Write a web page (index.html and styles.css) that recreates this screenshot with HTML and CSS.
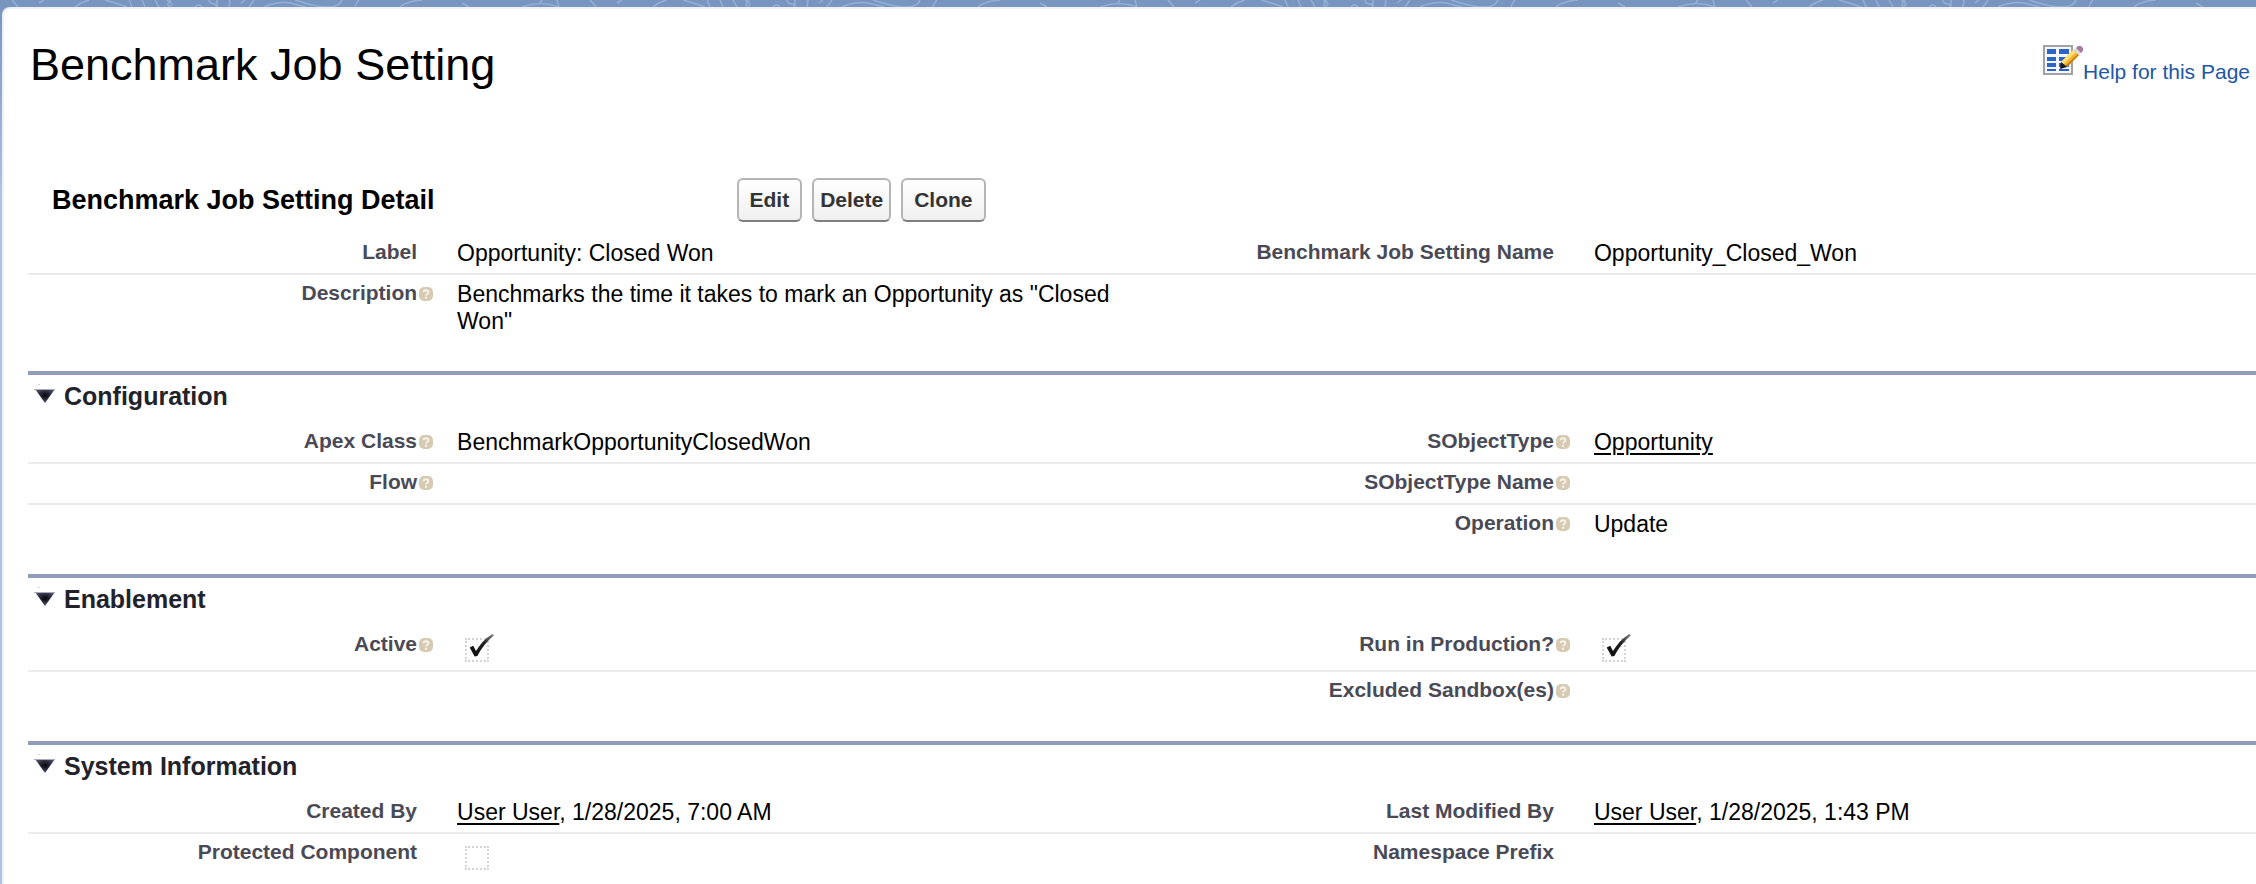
FILE: index.html
```html
<!DOCTYPE html>
<html lang="en">
<head>
<meta charset="utf-8">
<title>Benchmark Job Setting</title>
<link rel="stylesheet" href="styles.css">
</head>
<body>
<svg class="defs" width="0" height="0" aria-hidden="true">
  <defs>
    <radialGradient id="arrowFill" cx="50%" cy="45%" r="55%">
      <stop offset="0" stop-color="#05050a"/>
      <stop offset="1" stop-color="#50546f"/>
    </radialGradient>
    <linearGradient id="tickFill" x1="0" y1="1" x2="1" y2="0">
      <stop offset="0" stop-color="#0c0c0c"/>
      <stop offset=".6" stop-color="#222"/>
      <stop offset="1" stop-color="#8a8a8a"/>
    </linearGradient>
    <symbol id="help" viewBox="0 0 14 14">
      <rect width="14" height="14" rx="5" fill="#d6cab3"/>
      <path d="M4.6 5.2C4.7 2.6 9.4 2.6 9.4 5.2C9.4 7 7 6.8 7 8.6" fill="none" stroke="#f8f4ec" stroke-width="1.8"/>
      <rect x="6" y="9.8" width="2" height="2" fill="#f8f4ec"/>
    </symbol>
    <symbol id="arrow" viewBox="0 0 22 20">
      <rect x="4" y="0" width="2" height="1" fill="#d5d6df"/>
      <path d="M1 5H21L11 19Z" fill="url(#arrowFill)"/>
      <path d="M0 5.500H21" stroke="#a9abbd" stroke-width="1"/>
    </symbol>
    <symbol id="tick" viewBox="0 0 32 30">
      <path d="M4 15L8 13L11 19C15 12 21 5 29 0L31 1.500C23 8 17 16 12.500 24.500L9.500 25Z" fill="url(#tickFill)"/>
    </symbol>
  </defs>
</svg>
<svg class="waves" width="100%" height="7" aria-hidden="true">
  <defs>
    <pattern id="wave" width="578" height="7" patternUnits="userSpaceOnUse">
      <path d="M12 0L18 7M39 3L44 0M75 7Q81 2 89 0M105 0Q116 3 127 7M129 0Q131 4 132 7M142 0L145 7M155 0L159 7M167 0Q175 4 170 6Q165 6 171 0M195 7Q199 3 202 7M209 0Q209 4 215 4L217 7V0M230 0L229 7M241 3L245 0M249 7L254 0M264 7Q280 0 294 4L306 7M295 0Q337 14 342 0M355 7Q356 3 359 0M400 7Q407 1 422 0M462 3L469 7M522 7Q541 0 559 7M539 4L542 0M557 0L559 7" fill="none" stroke="#96afd4" stroke-width="1.500"/>
    </pattern>
  </defs>
  <rect width="100%" height="7" fill="url(#wave)"/>
</svg>
<main class="panel">
  <header class="page-head">
    <h1>Benchmark Job Setting</h1>
    <a class="help-link" href="#help">
      <svg class="help-pic" viewBox="0 0 40 31" aria-hidden="true">
        <rect x="1" y="2" width="28" height="28" fill="#f4f7fc" stroke="#a2a2a2" stroke-width="2"/>
        <path d="M4 5H13V10H4ZM16 5H26V10H16ZM4 13H13V17H4ZM16 13H26V17H16ZM4 19H13V23H4ZM16 19H26V23H16ZM4 25H13V27H4ZM16 25H26V27H16Z" fill="#2b65c8"/>
        <path d="M18 18L30 6L36 11L24 23Z" fill="#f6b62c"/>
        <path d="M18 18L30 6L32.500 8.500L20.500 20Z" fill="#fde07a"/>
        <path d="M22.500 21.500L35 10L36 11L24 23Z" fill="#c87812"/>
        <path d="M17 25L18 18L24 23Z" fill="#16161c"/>
        <path d="M30 6L33 4L38 9L36 11Z" fill="#d8d8dc"/>
        <path d="M33 4Q36 0 39 3Q42 6 38 9Z" fill="#a8789f"/>
      </svg>
      <span>Help for this Page</span>
    </a>
  </header>

  <div class="detail-head">
    <h2>Benchmark Job Setting Detail</h2>
    <div class="actions">
      <button type="button">Edit</button>
      <button type="button" class="tight">Delete</button>
      <button type="button">Clone</button>
    </div>
  </div>

  <table class="fields">
    <tr>
      <th scope="row" class="plain">Label</th><td>Opportunity: Closed Won</td>
      <th scope="row" class="plain">Benchmark Job Setting Name</th><td>Opportunity_Closed_Won</td>
    </tr>
    <tr>
      <th scope="row"><div class="name">Description<svg><use href="#help"/></svg></div></th><td>Benchmarks the time it takes to mark an Opportunity as "Closed Won"</td>
      <th></th><td></td>
    </tr>
  </table>

  <section>
    <h3><button type="button" aria-label="Collapse Configuration"><svg><use href="#arrow"/></svg></button>Configuration</h3>
    <table class="fields">
      <tr>
        <th scope="row"><div class="name">Apex Class<svg><use href="#help"/></svg></div></th><td>BenchmarkOpportunityClosedWon</td>
        <th scope="row"><div class="name">SObjectType<svg><use href="#help"/></svg></div></th><td><a href="#opportunity">Opportunity</a></td>
      </tr>
      <tr>
        <th scope="row"><div class="name">Flow<svg><use href="#help"/></svg></div></th><td></td>
        <th scope="row"><div class="name">SObjectType Name<svg><use href="#help"/></svg></div></th><td></td>
      </tr>
      <tr>
        <th></th><td></td>
        <th scope="row"><div class="name">Operation<svg><use href="#help"/></svg></div></th><td>Update</td>
      </tr>
    </table>
  </section>

  <section>
    <h3><button type="button" aria-label="Collapse Enablement"><svg><use href="#arrow"/></svg></button>Enablement</h3>
    <table class="fields">
      <tr>
        <th scope="row"><div class="name"><label for="active">Active</label><svg><use href="#help"/></svg></div></th>
        <td><span class="check"><input type="checkbox" id="active" checked disabled><svg><use href="#tick"/></svg></span></td>
        <th scope="row"><div class="name"><label for="production">Run in Production?</label><svg><use href="#help"/></svg></div></th>
        <td><span class="check"><input type="checkbox" id="production" checked disabled><svg><use href="#tick"/></svg></span></td>
      </tr>
      <tr>
        <th></th><td></td>
        <th scope="row"><div class="name">Excluded Sandbox(es)<svg><use href="#help"/></svg></div></th><td></td>
      </tr>
    </table>
  </section>

  <section>
    <h3><button type="button" aria-label="Collapse System Information"><svg><use href="#arrow"/></svg></button>System Information</h3>
    <table class="fields">
      <tr>
        <th scope="row" class="plain">Created By</th><td><a href="#user">User User</a>, 1/28/2025, 7:00 AM</td>
        <th scope="row" class="plain">Last Modified By</th><td><a href="#user">User User</a>, 1/28/2025, 1:43 PM</td>
      </tr>
      <tr>
        <th scope="row" class="plain"><label for="protected">Protected Component</label></th>
        <td><span class="check"><input type="checkbox" id="protected" disabled></span></td>
        <th scope="row" class="plain">Namespace Prefix</th><td></td>
      </tr>
    </table>
  </section>
</main>
</body>
</html>
```
FILE: styles.css
```css
* { box-sizing: border-box; }

html {
  min-height: 100%;
  background: linear-gradient(#7795be 0, #7a98c4 20px, #b1c2e1 200px);
}

body {
  margin: 0;
  min-height: 100vh;
  display: flex;
  flex-direction: column;
  overflow: hidden;
  font-family: Arial, "Liberation Sans", sans-serif;
  font-size: 23px;
  line-height: 27px;
  color: #000;
}

h1, h2, h3 { margin: 0; }

.defs { position: absolute; }

.waves { display: block; }

.panel {
  flex: 1;
  margin-left: 2px;
  padding-left: 24px;
  border: solid #edf0f5;
  border-width: 2px 0 0 2px;
  border-radius: 8px 0 0 0;
  background: #fff;
}

.page-head {
  display: flex;
  justify-content: space-between;
  align-items: flex-start;
  padding: 30px 6px 0 2px;
}

h1 {
  font-size: 45px;
  font-weight: 400;
  line-height: 52px;
}

.help-link {
  display: flex;
  margin-top: 5px;
  font-size: 21px;
  color: #2257a4;
  text-decoration: none;
}

.help-link span { padding-top: 14px; }

.help-pic {
  width: 40px;
  height: 31px;
}

.detail-head {
  display: grid;
  grid-template-columns: 31.8% 1fr;
  align-items: center;
  padding: 87px 0 12px;
}

h2 {
  padding-left: 24px;
  font-size: 27px;
  line-height: 32px;
}

.actions {
  display: flex;
  gap: 10px;
}

.actions button {
  height: 44px;
  padding: 0 11px;
  border: 2px solid #b5b5b5;
  border-bottom-color: #7f7f7f;
  border-radius: 6px;
  background: linear-gradient(#fff, #f0f0f0);
  font: bold 21px Arial, "Liberation Sans", sans-serif;
  color: #333;
}

.actions .tight { padding: 0 6px; }

.fields {
  width: 100%;
  table-layout: fixed;
  border-spacing: 0;
}

.fields th,
.fields td {
  height: 41px;
  border-bottom: 2px solid #ebebeb;
  vertical-align: top;
}

.fields tr:last-child > * { border-bottom-color: transparent; }

.fields th {
  width: 18.36%;
  padding: 4px 4px 0 0;
  font-size: 21px;
  text-align: right;
  color: #4a4a56;
}

.fields th.plain { padding-right: 20px; }

.fields td { padding: 6px 20px; }

.fields td:nth-child(2) { width: 32.67%; }

.fields a { color: #000; text-underline-offset: 3px; text-decoration-thickness: 2px; }

.name {
  display: flex;
  justify-content: flex-end;
  gap: 2px;
}

.name svg {
  width: 14px;
  height: 14px;
  margin-top: 8px;
}

section {
  margin-top: 28px;
  border-top: 4px solid #919cbc;
}

h3 {
  display: flex;
  align-items: flex-start;
  gap: 8px;
  padding: 7px 0 13px 6px;
  font-size: 25px;
  line-height: 28px;
  color: #22222a;
}

h3 button {
  padding: 2px 0 0;
  border: 0;
  background: none;
}

h3 svg {
  display: block;
  width: 22px;
  height: 20px;
}

.check {
  position: relative;
  display: block;
  width: 24px;
  height: 32px;
  margin-left: 8px;
  padding-top: 6px;
}

.check input {
  display: block;
  appearance: none;
  width: 24px;
  height: 24px;
  margin: 0;
  border: 2px dotted #d4d4d4;
}

.check svg {
  position: absolute;
  top: 2px;
  left: 1px;
  width: 29px;
  height: 27px;
}
```
